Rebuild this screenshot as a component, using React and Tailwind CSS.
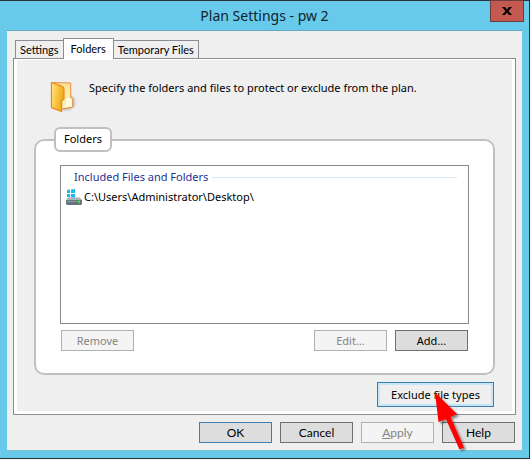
import React, { useState } from "react";

const TABS = ["Settings", "Folders", "Temporary Files"];

const buttonBase =
  "flex h-[21px] w-[73px] items-center justify-center border leading-none";
const normalButton = "border-[#707070] bg-[#dddddd] text-black";
const disabledButton = "border-[#adb2b5] bg-[#f4f4f4] text-[#838383]";

const FolderIcon = () => (
  <svg width="27" height="33" viewBox="0 0 28 33" className="shrink-0">
    <defs>
      <linearGradient id="folderFront" x1="0" y1="0" x2="1" y2="0.3">
        <stop offset="0" stopColor="#ffe695" />
        <stop offset="0.5" stopColor="#f9c842" />
        <stop offset="1" stopColor="#eda621" />
      </linearGradient>
      <linearGradient id="folderBack" x1="0" y1="0" x2="1" y2="1">
        <stop offset="0" stopColor="#fbd873" />
        <stop offset="1" stopColor="#fff6c8" />
      </linearGradient>
      <filter id="folderBlur">
        <feGaussianBlur stdDeviation="1" />
      </filter>
    </defs>
    <path
      d="M20 15l5 3 1 8-5 4-9 1z"
      fill="#777"
      opacity="0.45"
      filter="url(#folderBlur)"
    />
    <path
      d="M1.500 2L21.500 2.500V17.500l2 1V27.500l-11 2z"
      fill="url(#folderBack)"
      stroke="#e8893a"
      strokeLinejoin="round"
    />
    <path d="M17 18.500l3-1 2.500 2v7l-6 1z" fill="#fffbe8" />
    <path
      d="M1.500 2L12.500 6q2 1 2 3V19l-2.500 2v11L1.500 28z"
      fill="url(#folderFront)"
      stroke="#e58a2c"
      strokeWidth="1.300"
      strokeLinejoin="round"
    />
  </svg>
);

const DriveIcon = () => (
  <svg width="16" height="16" viewBox="0 0 16 16" className="shrink-0">
    <path d="M1 1l3-.5V4H1zM5 .4L9 0v4H5zM1 5h3v3.500L1 8zM5 5h4v4l-4-.5z" fill="#16bdf0" />
    <path d="M2 8.500h12l2 2.500H0z" fill="#aab5ba" />
    <path d="M1 5h3v3H1zM5 5h4v3H5z" fill="#16bdf0" />
    <path d="M0 11h16v4l-1 1H1l-1-1z" fill="#66757d" />
    <path d="M1 12h10v1H1z" fill="#8c999f" />
    <path d="M12 11.500h2V14h-2z" fill="#43e34a" />
  </svg>
);

const Arrow = () => (
  <svg
    width="34"
    height="64"
    viewBox="0 0 34 64"
    className="pointer-events-none absolute left-[56px] top-[9px] z-10"
  >
    <defs>
      <filter id="arrowShadow" x="-20%" y="-20%" width="150%" height="150%">
        <feDropShadow dx="2" dy="2" stdDeviation="1" floodOpacity="0.45" />
      </filter>
    </defs>
    <path
      d="M2 1.500L5.500 31l7.500-3 13.500 30.500 4.500-2L17.500 26l6.500-3z"
      fill="#fe0000"
      filter="url(#arrowShadow)"
    />
  </svg>
);

const App = () => {
  const [tab, setTab] = useState("Folders");

  return (
    <div className="min-h-screen bg-[#f4f4f4] pr-px font-['Noto_Sans','Open_Sans',sans-serif] text-[11px] text-black select-none">
      <main className="border-y border-r border-[#2b3338] bg-[#67caeb] pr-[7px] pb-[7px] pl-[7px]">
        <header className="relative flex h-[29px] items-center justify-center">
          <h1 className="text-[14px] leading-none text-[#10242b]">
            Plan Settings - pw 2
          </h1>
          <button
            aria-label="Close"
            className="absolute -top-px -right-[2px] flex h-[22px] w-[34px] items-center justify-center border border-[#6c3c3c] bg-[#c3594f]"
          >
            <svg width="10" height="8" viewBox="0 0 10 8">
              <path d="M0 0h3l2 2.500L7 0h3L6.500 4 10 8H7L5 5.500 3 8H0l3.500-4z" fill="#000" />
            </svg>
          </button>
        </header>

        <section className="border-t border-b border-t-[#69a9c0] border-b-[#7cc0d4] bg-[#efefef] pt-[7px] pr-[6px] pb-[7px] pl-[6px]">
          <div
            role="tablist"
            className="relative flex items-end px-[2px] font-[Lato,'Liberation_Sans',sans-serif]"
          >
            {TABS.map((name) => (
              <button
                key={name}
                role="tab"
                aria-selected={tab === name}
                onClick={() => setTab(name)}
                className={
                  tab === name
                    ? "relative z-10 -mr-px -mb-px flex h-[21px] items-center border border-b-0 border-[#898c95] bg-white px-[7px]"
                    : "-mr-px flex h-[18px] items-center border border-b-0 border-[#898c95] bg-[#efefef] px-1 pt-px"
                }
              >
                {name}
              </button>
            ))}
          </div>

          <div className="border border-[#898c95] bg-white px-[3px] pt-px pb-[3px]">
            <div className="bg-[#efefef] pt-[20px] pr-[17px] pb-[4px] pl-[17px]">
              <div className="flex gap-3 pl-4">
                <FolderIcon />
                <p className="leading-4">
                  Specify the folders and files to protect or exclude from the
                  plan.
                </p>
              </div>

              <fieldset className="mt-[14px] rounded-[10px] border-2 border-[#c0c0c0] bg-white px-[24px] pb-[22px]">
                <legend className="-ml-[6px] flex h-[25px] items-center rounded-md border-2 border-[#c0c0c0] bg-white px-2">
                  Folders
                </legend>
                <div className="mt-[13px] h-[159px] border border-[#828790] bg-white pt-[3px] pr-[11px] pl-[5px]">
                  <div className="flex items-center gap-1 pl-2">
                    <h2 className="leading-4 text-[#1e3296]">
                      Included Files and Folders
                    </h2>
                    <span className="h-px grow bg-[#dbe8f6]" />
                  </div>
                  <ul className="mt-1">
                    <li className="flex items-center gap-[2px] leading-4">
                      <DriveIcon />
                      C:\Users\Administrator\Desktop\
                    </li>
                  </ul>
                </div>
                <div className="mt-[6px] flex gap-2 px-px">
                  <button disabled className={`${buttonBase} ${disabledButton} mr-auto`}>
                    Remove
                  </button>
                  <button disabled className={`${buttonBase} ${disabledButton}`}>
                    Edit...
                  </button>
                  <button className={`${buttonBase} ${normalButton}`}>Add...</button>
                </div>
              </fieldset>

              <div className="mt-[7px] flex justify-end pr-px">
                <div className="relative">
                  <button className="flex h-[25px] w-[117px] items-center justify-center border border-[#3c7fb1] bg-[#efefef] leading-none ring-2 ring-[#c5e6f9] ring-inset">
                    Exclude file types
                  </button>
                  <Arrow />
                </div>
              </div>
            </div>
          </div>

          <footer className="mt-[7px] flex justify-end gap-2 pr-px font-[Lato,'Liberation_Sans',sans-serif] text-[12px]">
            <button className={`${buttonBase} border-[#3c7fb1] bg-[#dddddd]`}>OK</button>
            <button className={`${buttonBase} ${normalButton}`}>Cancel</button>
            <button disabled className={`${buttonBase} ${disabledButton}`}>
              <span className="underline">A</span>pply
            </button>
            <button className={`${buttonBase} ${normalButton}`}>Help</button>
          </footer>
        </section>
      </main>
    </div>
  );
};

export default App;
